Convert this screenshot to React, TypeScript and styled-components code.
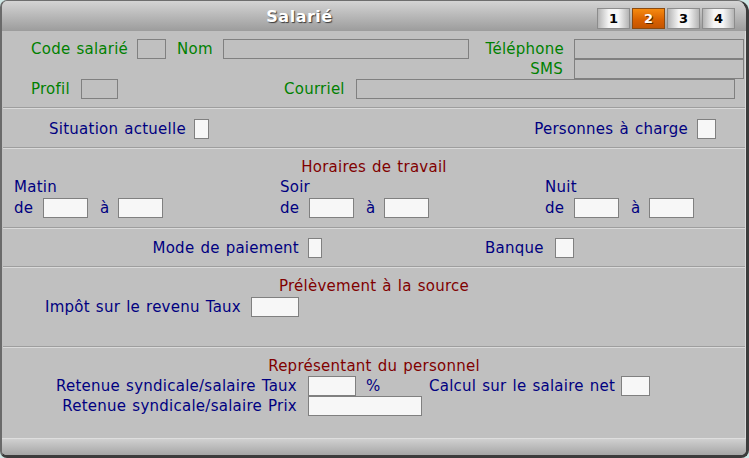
import React from "react";
import styled, { createGlobalStyle } from "styled-components";

const GlobalStyle = createGlobalStyle`
	html, body {
		margin: 0;
		padding: 0;
		background: #cfe7e5;
	}
	* {
		box-sizing: border-box;
	}
`;

const GREEN = "#008000";
const NAVY = "#000080";
const MAROON = "#800000";

const Window = styled.div`
	width: 749px;
	height: 458px;

	display: flex;
	flex-direction: column;
	overflow: hidden;

	border-top: 1px solid #6e6e6e;
	border-left: 2px solid #6a6a6a;
	border-right: 3px solid #3c3c3c;
	border-bottom: 3px solid #3c3c3c;
	border-radius: 7px 12px 8px 7px;

	background: #c0c0c0;
	font-family: "DejaVu Sans", Verdana, sans-serif;
	font-size: 15px;
	letter-spacing: 0.25px;
	word-spacing: 1px;
`;

const TitleBar = styled.div`
	height: 30px;
	flex-shrink: 0;

	display: flex;
	align-items: flex-start;

	background: linear-gradient(#d4d4d4, #9c9c9c);
`;

const Title = styled.div`
	flex: 1;
	height: 30px;

	display: flex;
	align-items: center;
	justify-content: center;

	color: #ffffff;
	font-weight: bold;
	font-size: 16px;
	letter-spacing: 0.5px;
	text-shadow: 1px 1px 1px #3a3a3a;
`;

const Tabs = styled.div`
	display: flex;
	gap: 2px;
	margin-top: 7px;
	margin-right: 11px;
`;

const Tab = styled.div<{ $active?: boolean }>`
	width: 33px;
	height: 21px;

	display: flex;
	align-items: center;
	justify-content: center;

	border: 1px solid ${({ $active }) => ($active ? "#8a4a10" : "#8c8c8c")};
	background: ${({ $active }) =>
		$active
			? "linear-gradient(#f58a10, #d86000 60%, #c45400)"
			: "linear-gradient(to right, #b4b4b4, #f6f6f6 35%, #f6f6f6 65%, #b4b4b4)"};

	color: ${({ $active }) => ($active ? "#ffffff" : "#000000")};
	font-weight: bold;
	font-size: 13px;
	letter-spacing: 0;
	text-shadow: ${({ $active }) => ($active ? "1px 1px 0 #5a2a00" : "none")};
`;

const Body = styled.div`
	flex: 1;

	display: flex;
	flex-direction: column;

	box-shadow: inset -1px 0 0 #dadada;
`;

const Section = styled.div<{ $top: number; $bottom: number }>`
	display: flex;
	flex-direction: column;

	padding-top: ${({ $top }) => $top}px;
	padding-bottom: ${({ $bottom }) => $bottom}px;
`;

const Divider = styled.div`
	height: 2px;
	margin: 0 1px;

	border-top: 1px solid #9e9e9e;
	border-bottom: 1px solid #dadada;
`;

const Row = styled.div<{ $pad?: number; $gap?: number }>`
	height: 20px;

	display: flex;
	align-items: center;

	padding-left: ${({ $pad }) => $pad ?? 0}px;
	margin-top: ${({ $gap }) => $gap ?? 0}px;
`;

const Label = styled.div<{
	$w?: number;
	$color?: string;
	$right?: boolean;
	$pr?: number;
	$pl?: number;
	$ml?: number;
}>`
	width: ${({ $w }) => ($w ? `${$w}px` : "auto")};
	flex-shrink: 0;

	padding-right: ${({ $pr }) => $pr ?? 0}px;
	padding-left: ${({ $pl }) => $pl ?? 0}px;
	margin-left: ${({ $ml }) => $ml ?? 0}px;

	text-align: ${({ $right }) => ($right ? "right" : "left")};
	white-space: nowrap;
	line-height: 18px;
	color: ${({ $color }) => $color ?? NAVY};
`;

const Field = styled.div<{ $w: number; $white?: boolean; $ml?: number }>`
	width: ${({ $w }) => $w}px;
	height: 20px;
	flex-shrink: 0;

	margin-left: ${({ $ml }) => $ml ?? 0}px;

	border: 1px solid #808080;
	background: ${({ $white }) => ($white ? "#f7f7f7" : "#c0c0c0")};
`;

const Heading = styled.div`
	height: 18px;

	line-height: 18px;
	text-align: center;
	color: ${MAROON};
`;

const Shifts = styled.div`
	display: grid;
	grid-template-columns: 266px 265px auto;

	padding-left: 12px;
	margin-top: 2px;
`;

const Shift = styled.div`
	display: flex;
	flex-direction: column;
	gap: 2px;
`;

const Footer = styled.div`
	height: 17px;
	flex-shrink: 0;

	border-top: 1px solid #dedede;
	background: linear-gradient(#d0d0d0, #a6a6a6);
`;

function ShiftColumn({ name }: { name: string }) {
	return (
		<Shift>
			<Label>{name}</Label>
			<Row>
				<Label $w={29}>de</Label>
				<Field $w={45} $white />
				<Label $w={30} $pl={12}>
					à
				</Label>
				<Field $w={45} $white />
			</Row>
		</Shift>
	);
}

export default function App() {
	return (
		<>
			<GlobalStyle />
			<Window>
				<TitleBar>
					<Title>Salarié</Title>
					<Tabs>
						<Tab>1</Tab>
						<Tab $active>2</Tab>
						<Tab>3</Tab>
						<Tab>4</Tab>
					</Tabs>
				</TitleBar>

				<Body>
					<Section $top={8} $bottom={8}>
						<Row $pad={29}>
							<Label $w={106} $color={GREEN}>
								Code salarié
							</Label>
							<Field $w={29} />
							<Label $w={46} $ml={11} $color={GREEN}>
								Nom
							</Label>
							<Field $w={246} />
							<Label $w={105} $right $pr={10} $color={GREEN}>
								Téléphone
							</Label>
							<Field $w={170} />
						</Row>
						<Row $pad={29}>
							<Label $w={543} $right $pr={11} $color={GREEN}>
								SMS
							</Label>
							<Field $w={170} />
						</Row>
						<Row $pad={29}>
							<Label $w={50} $color={GREEN}>
								Profil
							</Label>
							<Field $w={37} />
							<Label $w={72} $ml={166} $color={GREEN}>
								Courriel
							</Label>
							<Field $w={379} />
						</Row>
					</Section>
					<Divider />

					<Section $top={10} $bottom={8}>
						<Row $pad={47}>
							<Label $w={145}>Situation actuelle</Label>
							<Field $w={15} $white />
							<Label $w={217} $ml={271} $right $pr={9}>
								Personnes à charge
							</Label>
							<Field $w={19} $white />
						</Row>
					</Section>
					<Divider />

					<Section $top={9} $bottom={9}>
						<Heading>Horaires de travail</Heading>
						<Shifts>
							<ShiftColumn name="Matin" />
							<ShiftColumn name="Soir" />
							<ShiftColumn name="Nuit" />
						</Shifts>
					</Section>
					<Divider />

					<Section $top={9} $bottom={8}>
						<Row $pad={98}>
							<Label $w={208} $right $pr={9}>
								Mode de paiement
							</Label>
							<Field $w={14} $white />
							<Label $w={70} $ml={163}>
								Banque
							</Label>
							<Field $w={19} $white />
						</Row>
					</Section>
					<Divider />

					<Section $top={9} $bottom={29}>
						<Heading>Prélèvement à la source</Heading>
						<Row $pad={29} $gap={2}>
							<Label $w={220} $right $pr={10}>
								Impôt sur le revenu Taux
							</Label>
							<Field $w={48} $white />
						</Row>
					</Section>
					<Divider />

					<Section $top={9} $bottom={0}>
						<Heading>Représentant du personnel</Heading>
						<Row $pad={29} $gap={1}>
							<Label $w={277} $right $pr={11}>
								Retenue syndicale/salaire Taux
							</Label>
							<Field $w={48} $white />
							<Label $w={63} $ml={10}>
								%
							</Label>
							<Label $w={192}>Calcul sur le salaire net</Label>
							<Field $w={29} $white />
						</Row>
						<Row $pad={29}>
							<Label $w={277} $right $pr={11}>
								Retenue syndicale/salaire Prix
							</Label>
							<Field $w={114} $white />
						</Row>
					</Section>
				</Body>

				<Footer />
			</Window>
		</>
	);
}
